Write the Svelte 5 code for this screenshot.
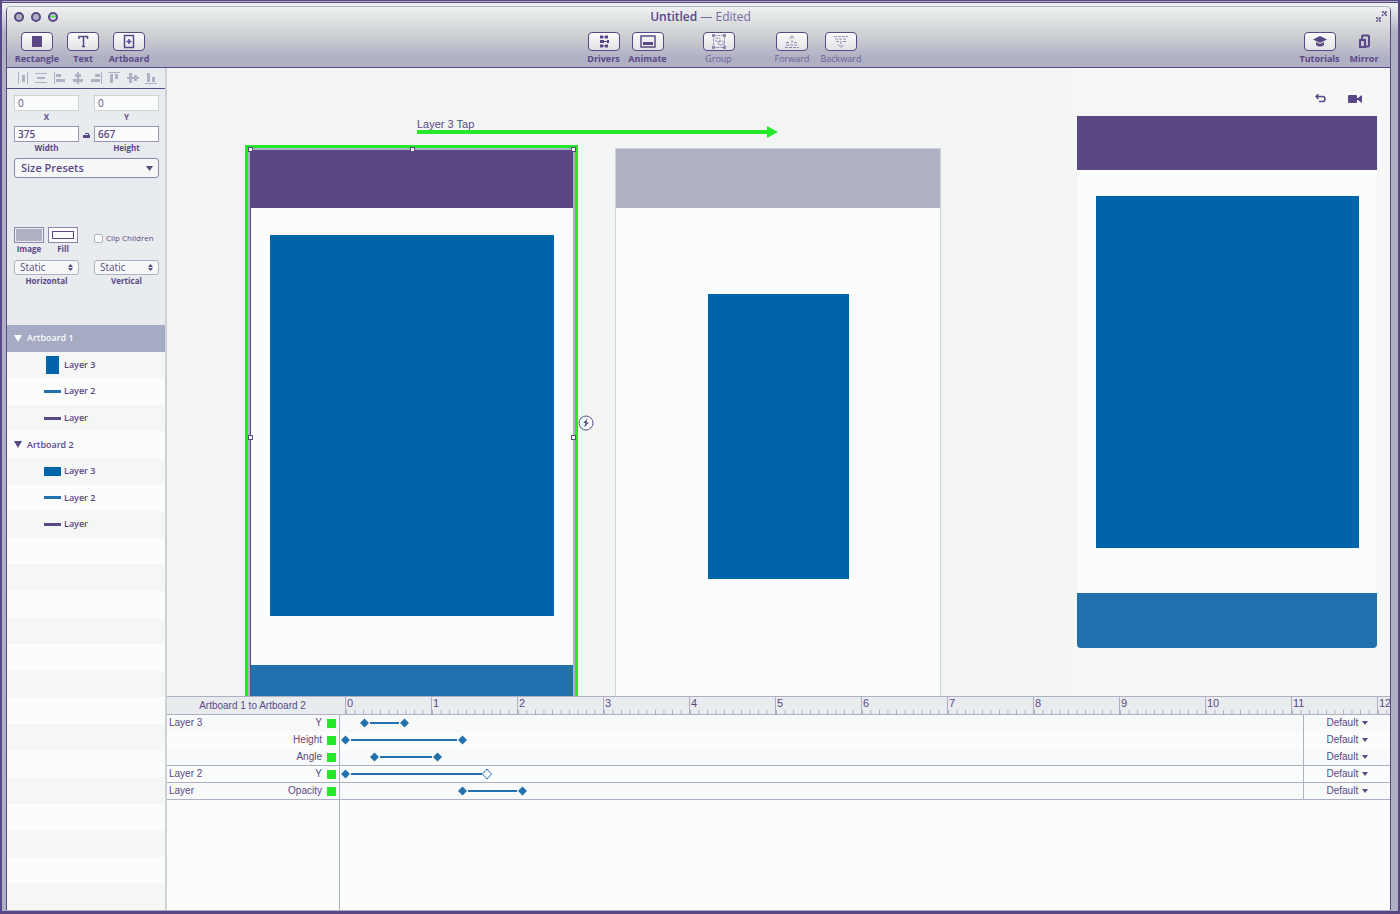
<script>
  const alignments = [
    { name: 'Distribute horizontally', d: 'M1 0h1v12h-1zM10 0h1v12h-1zM5 3h3v7h-3z' },
    { name: 'Distribute vertically', d: 'M0 1h12v1h-12zM0 10h12v1h-12zM2 5h8v2h-8z' },
    { name: 'Align left', d: 'M0 0h1v12h-1zM2 2h5v3h-5zM2 7h9v3h-9z' },
    { name: 'Align centre', d: 'M5 0h2v12h-2zM3 2h6v3h-6zM1 7h10v3h-10z' },
    { name: 'Align right', d: 'M11 0h1v12h-1zM5 2h5v3h-5zM1 7h9v3h-9z' },
    { name: 'Align top', d: 'M0 0h12v1h-12zM2 2h3v9h-3zM7 2h3v5h-3z' },
    { name: 'Align middle', d: 'M0 5h12v2h-12zM2 1h3v10h-3zM7 3h3v6h-3z' },
    { name: 'Align bottom', d: 'M0 11h12v1h-12zM2 1h3v9h-3zM7 5h3v5h-3z' }
  ];

  const layers = [
    { label: 'Artboard 1', group: true, selected: true },
    { label: 'Layer 3', thumb: 'tall' },
    { label: 'Layer 2', thumb: 'bar blue' },
    { label: 'Layer', thumb: 'bar' },
    { label: 'Artboard 2', group: true },
    { label: 'Layer 3', thumb: 'wide' },
    { label: 'Layer 2', thumb: 'bar blue' },
    { label: 'Layer', thumb: 'bar' }
  ];
  const rowCount = 22;
  const rows = Array.from({ length: rowCount }, (_, i) => layers[i] ?? null);

  const seconds = Array.from({ length: 13 }, (_, i) => i);
  // Keyframe offsets are measured from the left edge of the track.
  const tracks = [
    { layer: 'Layer 3', prop: 'Y', from: 24, to: 64, shade: true },
    { layer: '', prop: 'Height', from: 5, to: 122 },
    { layer: '', prop: 'Angle', from: 34, to: 97, shade: true, last: true },
    { layer: 'Layer 2', prop: 'Y', from: 5, to: 147, open: true, last: true },
    { layer: 'Layer', prop: 'Opacity', from: 122, to: 182, shade: true, last: true }
  ];
</script>

{#snippet tool(name, disabled, width)}
  <button class="tool {width}" class:disabled {disabled}>
    <span class="face" class:bare={name === 'Mirror'}>
      <svg width="18" height="15" viewBox="0 0 18 15" fill="none" stroke="currentColor" aria-hidden="true">
        {#if name === 'Rectangle'}
          <rect x="4" y="2" width="10" height="11" fill="currentColor" stroke="none" />
        {:else if name === 'Text'}
          <path d="M5 5V2.500h8.500V5M9.500 2.500v10M8 12.500h3" stroke-width="1.500" />
        {:else if name === 'Artboard'}
          <path d="M4.500 1.500h9v12h-9zM9 5v5M6.500 7.500h5" stroke-width="1.500" />
        {:else if name === 'Drivers'}
          <path d="M5 3h8M8 7.500h5M5 12h8" />
          <path d="M5 1.500h3v3H5zM10 1.500h3v3h-3zM5 6h4v3H5zM12 6h2v3h-2zM5 10.500h3v3H5zM10 10.500h3v3h-3z" fill="currentColor" stroke="none" />
        {:else if name === 'Animate'}
          <rect x="2" y="2" width="14" height="11" stroke-width="1.500" />
          <path d="M4 8h10v3H4z" fill="currentColor" stroke="none" />
        {:else if name === 'Group'}
          <rect x="3.500" y="1.500" width="11" height="12" stroke-dasharray="3 1" />
          <path d="M6 4h4v4H6zM9 7h4v4H9z" stroke-dasharray="2 1" />
          <path d="M2 0h3v3H2zM13 0h3v3h-3zM2 12h3v3H2zM13 12h3v3h-3z" fill="currentColor" stroke="none" />
        {:else if name === 'Forward'}
          <path d="M9 9V2M6 4.500L9 1.500l3 3M3 8.500h4M11 8.500h4M3 11h12M2 13.500h14" stroke-dasharray="3 1" />
        {:else if name === 'Backward'}
          <path d="M2 2.500h14M3 5h12M4 7.500h3M11 7.500h3M9 7v5M6 10.500l3 3 3-3" stroke-dasharray="3 1" />
        {:else if name === 'Tutorials'}
          <path d="M9 2L2 5.500 9 9l7-3.500zM5 8v3q4 3 8 0V8l-4 2z" fill="currentColor" stroke="none" />
        {:else}
          <path d="M7 5V2.500q0-1 1-1h5q1 0 1 1v9q0 1-1 1H11" stroke-width="2" />
          <rect x="5" y="6" width="5" height="7" stroke-width="2" />
        {/if}
      </svg>
    </span>
    <span>{name}</span>
  </button>
{/snippet}

<div class="desktop">
  <div class="window">
    <header>
      <div class="titlebar">
        <div class="lights">
          <button aria-label="Close"><i></i></button>
          <button aria-label="Minimise"><i></i></button>
          <button aria-label="Zoom"><i class="go"></i></button>
        </div>
        <h1>Untitled <span>— Edited</span></h1>
        <button class="expand" aria-label="Full screen">
          <svg width="12" height="12" viewBox="0 0 12 12" fill="none" stroke="#5a4886" stroke-width="1.500">
            <path d="M7 5l4-4M7 1h4v4M5 7l-4 4M1 7h4v4" stroke-dasharray="2 1" />
          </svg>
        </button>
      </div>
      <nav class="toolbar" aria-label="Tools">
        <div class="tools">
          {@render tool('Rectangle', false, 'mid')}
          {@render tool('Text', false, 'mid')}
          {@render tool('Artboard', false, 'mid')}
        </div>
        <div class="tools spaced">
          <div class="tools">
            {@render tool('Drivers', false, 'snug')}
            {@render tool('Animate', false, 'snug')}
          </div>
          {@render tool('Group', true, 'mid')}
          <div class="tools">
            {@render tool('Forward', true, 'large')}
            {@render tool('Backward', true, 'large')}
          </div>
        </div>
        <div class="tools">
          {@render tool('Tutorials', false, 'large')}
          {@render tool('Mirror', false, 'small')}
        </div>
      </nav>
    </header>

    <div class="body">
      <aside>
        <div class="aligns">
          {#each alignments as a}
            <button aria-label={a.name}>
              <svg width="12" height="12" viewBox="0 0 12 12" fill="#b0b0c4"><path d={a.d} /></svg>
            </button>
          {/each}
        </div>

        <div class="inspector">
          <div class="pair">
            <label class="field faint"><input value="0" /><span>X</span></label>
            <label class="field faint"><input value="0" /><span>Y</span></label>
          </div>
          <div class="pair sizes">
            <label class="field"><input value="375" /><span>Width</span></label>
            <svg class="lock" width="7" height="6" viewBox="0 0 7 6" aria-hidden="true">
              <path d="M0 3h7v3H0zM2 1h4v3H5V2H2z" fill="#5a4886" />
            </svg>
            <label class="field"><input value="667" /><span>Height</span></label>
          </div>
          <div class="presets">
            <select aria-label="Size presets"><option>Size Presets</option></select>
            <svg width="7" height="5" viewBox="0 0 7 5" aria-hidden="true"><path d="M0 0h7L3.500 5z" fill="#5a4886" /></svg>
          </div>
          <div class="pair paint">
            <div class="swatches">
              <button class="swatch"><span class="chip image"></span>Image</button>
              <button class="swatch"><span class="chip fill"><i></i></span>Fill</button>
            </div>
            <label class="clip"><input type="checkbox" />Clip Children</label>
          </div>
          <div class="pair">
            {#each ['Horizontal', 'Vertical'] as axis}
              <label class="field">
                <span class="static">
                  <select><option>Static</option></select>
                  <svg width="5" height="7" viewBox="0 0 5 7" aria-hidden="true"><path d="M0 3L2.500 0 5 3zM0 4h5L2.500 7z" fill="#5a4886" /></svg>
                </span>
                <span>{axis}</span>
              </label>
            {/each}
          </div>
        </div>

        <ul class="layers">
          {#each rows as row}
            <li class:selected={row?.selected}>
              {#if row?.group}
                <svg width="8" height="7" viewBox="0 0 8 7" aria-hidden="true"><path d="M0 0h8L4 7z" fill="currentColor" /></svg>
                <span>{row.label}</span>
              {:else if row}
                <span class="thumb"><i class={row.thumb}></i></span>
                <span>{row.label}</span>
              {/if}
            </li>
          {/each}
        </ul>
      </aside>

      <main>
        <section class="canvas" aria-label="Canvas">
          <div class="transition">
            <span>Layer 3 Tap</span>
            <svg width="361" height="12" viewBox="0 0 361 12" fill="#25e82b" aria-hidden="true">
              <path d="M0 4h350V0l11 6-11 6V8H0z" />
            </svg>
          </div>

          <div class="artboard first">
            <div class="head"></div>
            <div class="card"></div>
            <div class="foot"></div>
            <i class="handle tl"></i><i class="handle tc"></i><i class="handle tr"></i>
            <i class="handle ml"></i><i class="handle mr"></i>
          </div>
          <svg class="bolt" width="16" height="16" viewBox="0 0 16 16" aria-hidden="true">
            <circle cx="8" cy="8" r="7" fill="#fbfcfc" stroke="#5a4886" />
            <path d="M9.500 3.500L5 8h2.500L6 12.500 11 7.500H8.500z" fill="#5a4886" />
          </svg>

          <div class="artboard second">
            <div class="head"></div>
            <div class="card"></div>
          </div>

          <div class="preview">
            <div class="controls">
              <button aria-label="Restart">
                <svg width="11" height="9" viewBox="0 0 11 9" fill="none" stroke="#5a4886" stroke-width="1.500">
                  <path d="M3.500 0L1 2.500 3.500 5M1 2.500h6.500q2.500 0 2.500 2.500t-2.500 2.500H4" />
                </svg>
              </button>
              <button aria-label="Record">
                <svg width="14" height="8" viewBox="0 0 14 8" fill="#5a4886">
                  <path d="M1 0h7q1 0 1 1v6q0 1-1 1H1Q0 8 0 7V1Q0 0 1 0zM9 3h1l3-2.500h1v7h-1L10 5H9z" />
                </svg>
              </button>
            </div>
            <div class="device">
              <div class="head"></div>
              <div class="card"></div>
              <div class="foot"></div>
            </div>
          </div>
        </section>

        <section class="timeline" aria-label="Timeline">
          <div class="line ruler">
            <div class="names"><span class="heading">Artboard 1 to Artboard 2</span></div>
            <div class="scale">
              {#each seconds as s}<span>{s}</span>{/each}
            </div>
          </div>
          {#each tracks as t}
            <div class="line" class:shade={t.shade} class:last={t.last}>
              <div class="names"><span>{t.layer}</span><span>{t.prop}</span><i></i></div>
              <div class="track">
                <svg width="100%" height="16" aria-hidden="true">
                  <line x1={t.from + 6} x2={t.to - 5} y1="8" y2="8" stroke="#2271ae" stroke-width="2" />
                  <path d="M-4.500 0L0-4.500 4.500 0 0 4.500z" fill="#2271ae" transform="translate({t.from + 0.5} 8)" />
                  {#if t.open}
                    <path d="M-4.500 0L0-5 4.500 0 0 5z" fill="#fbfcfc" stroke="#2271ae" transform="translate({t.to} 8)" />
                  {:else}
                    <path d="M-4.500 0L0-4.500 4.500 0 0 4.500z" fill="#2271ae" transform="translate({t.to + 0.5} 8)" />
                  {/if}
                </svg>
              </div>
              <div class="easing">
                <select aria-label="Easing"><option>Default</option></select>
                <svg width="6" height="4" viewBox="0 0 6 4" aria-hidden="true"><path d="M0 0h6L3 4z" fill="#5a4886" /></svg>
              </div>
            </div>
          {/each}
          <div class="line rest"><div class="names"></div></div>
        </section>
      </main>
    </div>
  </div>
</div>

<style>
  :global(body) { margin: 0; background: #5a4886; }
  * { box-sizing: border-box; }
  button, input, select { font: inherit; color: inherit; margin: 0; padding: 0; border: 0; background: none; border-radius: 0; appearance: none; }
  svg { display: block; flex: none; }
  i { display: block; }

  .desktop {
    height: 100vh;
    min-height: 800px;
    display: flex;
    padding: 3px 7px 1px 4px;
    border: 2px solid #5a4886;
    border-top: 3px double #5a4886;
    border-bottom-width: 3px;
    background: linear-gradient(#eceeef 3px, #b0b0c4 30px);
    color: #5a4886;
    font-family: "Open Sans", "Noto Sans", sans-serif;
    font-size: 9px;
    line-height: 12px;
  }
  .window {
    flex: 1;
    min-width: 0;
    display: flex;
    flex-direction: column;
    border: 1px solid #5a4886;
    border-top-color: #b0b0c4;
    border-bottom: 0;
    border-radius: 5px 5px 0 0;
    overflow: hidden;
    background: #fbfcfc;
  }

  header {
    background: linear-gradient(#eef0f1, #cfd2d4 45%, #b0b0c4 85%);
    border-bottom: 1px solid #5a4886;
  }
  .titlebar { display: grid; grid-template-columns: 1fr auto 1fr; align-items: center; height: 19px; padding: 0 3px 0 7px; }
  .lights { display: flex; gap: 7px; }
  .lights i { width: 10px; height: 10px; border: 2px solid #5a4886; border-radius: 50%; background: #b0b0c4; }
  .lights i.go { background: linear-gradient(#cfd2d4 20%, #25e82b 40%, #cfd2d4 60%); }
  h1 { margin: 0; font-size: 12px; font-weight: 600; line-height: 16px; }
  h1 span { font-weight: 400; color: #776b9d; }
  .expand { justify-self: end; }
  .toolbar { display: flex; justify-content: space-between; padding: 6px 6px 2px 7px; }
  .tools { display: flex; }
  .spaced { gap: 26px; }
  .tool { display: flex; flex-direction: column; align-items: center; gap: 2px; font-weight: 700; }
  .tool.small { width: 40px; }
  .tool.snug { width: 44px; }
  .tool.mid { width: 46px; }
  .tool.large { width: 49px; }
  .face { width: 32px; height: 19px; display: grid; place-items: center; border: 1px solid #5a4886; border-radius: 4px; background: linear-gradient(#fbfcfc, #e0e2e5); }
  .face.bare { border-color: transparent; background: none; }
  .tool.disabled { font-weight: 400; color: #6f6298; }
  .disabled svg { opacity: 0.7; }

  .body { flex: 1; min-height: 0; display: flex; }
  aside { flex: none; width: 160px; display: flex; flex-direction: column; border-right: 2px solid #cfd2d4; background: #e9ecee; }
  .aligns { display: flex; justify-content: space-between; align-items: center; height: 21px; padding: 0 8px 0 10px; border-bottom: 1px solid #5a4886; }
  .inspector { height: 236px; padding: 6px 6px 0 7px; font-weight: 600; }
  .pair { display: flex; justify-content: space-between; }
  .field { width: 65px; display: flex; flex-direction: column; text-align: center; font-size: 8px; font-weight: 700; }
  .field > input { width: 100%; height: 16px; padding: 0 3px; border: 1px solid #9a93b5; background: #fbfcfc; font-size: 10px; font-weight: 600; }
  .faint > input { border-color: #cfd2d4; font-weight: 400; }
  .sizes { margin-top: 3px; }
  .lock { margin-top: 6px; }
  .presets { display: flex; align-items: center; height: 20px; margin-top: 4px; padding-right: 5px; border: 1px solid #8d85ab; border-radius: 3px; background: #f6f8f8; }
  .presets select { flex: 1; min-width: 0; padding-left: 6px; font-size: 11px; line-height: 18px; }
  .paint { margin-top: 49px; }
  .swatches { display: flex; gap: 4px; }
  .swatch { width: 30px; text-align: center; font-size: 8px; font-weight: 700; }
  .chip { display: block; height: 16px; border: 1px solid #8d85ab; }
  .image { background: #b0b0c4; box-shadow: inset 0 0 0 1px #e9ecee; }
  .fill { padding: 3px; background: #fbfcfc; }
  .fill i { height: 8px; border: 1px solid #5a4886; }
  .clip { display: flex; align-items: center; gap: 3px; width: 65px; height: 22px; font-size: 8px; font-weight: 400; white-space: nowrap; }
  .clip input { flex: none; width: 9px; height: 9px; border: 1px solid #b0b0c4; border-radius: 2px; background: #fbfcfc; }
  .paint + .pair { margin-top: 5px; }
  .static { display: flex; align-items: center; height: 15px; padding: 0 5px; border: 1px solid #b0b0c4; border-radius: 3px; background: #f6f8f8; }
  .static select { flex: 1; min-width: 0; font-size: 10px; font-weight: 400; line-height: 13px; }

  .layers { flex: 1; display: flex; flex-direction: column; margin: 0; padding: 0; list-style: none; background: #fbfcfc; font-weight: 600; }
  li { flex: 1; display: flex; align-items: center; gap: 5px; padding-left: 7px; }
  li:nth-child(even) { background: #f5f7f7; }
  li.selected { background: #a5abc2; color: #fbfcfc; }
  .thumb { width: 17px; margin-left: 30px; margin-right: -2px; display: grid; place-items: center; }
  .thumb .bar { width: 17px; height: 3px; background: #5a4886; }
  .thumb .blue { background: #2271ae; }
  .thumb .tall { width: 13px; height: 18px; background: #0064aa; }
  .thumb .wide { width: 17px; height: 9px; background: #0064aa; }

  main { flex: 1; min-width: 0; display: flex; flex-direction: column; }
  .canvas { flex: 1; position: relative; overflow: hidden; display: flex; justify-content: flex-end; background: #f3f5f5; }
  .transition { position: absolute; left: 250px; top: 50px; font: 11px/12px "Liberation Sans", Arial, sans-serif; }
  .transition svg { margin-top: -4px; }
  .artboard { position: absolute; display: flex; flex-direction: column; background: #fbfcfc; }
  .first { left: 83px; top: 82px; width: 323px; height: 574px; border-left: 1px solid #5a4886; box-shadow: 0 0 0 2px #b0b0c4, 0 0 0 5px #25e82b; }
  .second { left: 449px; top: 81px; width: 324px; height: 575px; box-shadow: 0 0 0 1px #cfd2d4; }
  .artboard .head { height: 58px; background: #5a4886; }
  .second .head { height: 59px; background: #b0b0c4; }
  .card { background: #0064aa; }
  .first .card { height: 381px; margin: 27px 19px 0; }
  .second .card { height: 285px; margin: 86px 91px 0 92px; }
  .first .foot { flex: 1; margin-top: 49px; background: #2271ae; }
  .handle { position: absolute; width: 5px; height: 5px; border: 1px solid #5a4886; background: #fbfcfc; }
  .tl, .ml { left: -3px; }
  .tc { left: 159px; }
  .tr, .mr { right: -3px; }
  .tl, .tc, .tr { top: -3px; }
  .ml, .mr { top: 285px; }
  .bolt { position: absolute; left: 411px; top: 347px; }
  .preview { flex: none; display: flex; flex-direction: column; width: 317px; padding: 0 13px 0 4px; background: #f6f8f8; }
  .controls { display: flex; justify-content: flex-end; align-items: center; gap: 22px; height: 48px; padding: 13px 15px 0 0; }
  .device { background: #fbfcfc; border-radius: 0 0 4px 4px; overflow: hidden; box-shadow: 0 0 1px #cfd2d4; }
  .device .head { height: 54px; background: #5a4886; }
  .device .card { height: 352px; margin: 26px 18px 45px 19px; }
  .device .foot { height: 55px; background: #2271ae; }

  .timeline { flex: none; height: 214px; display: flex; flex-direction: column; border-top: 1px solid #b0b0c4; font: 10px/12px "Liberation Sans", Arial, sans-serif; }
  .line { flex: none; display: flex; height: 17px; }
  .ruler { height: 18px; background: #e9ecee; border-bottom: 1px solid #b0b0c4; }
  .shade { background: #f8f9f9; }
  .last { border-bottom: 1px solid #b0b0c4; }
  .rest { flex: 1; }
  .names { flex: none; width: 173px; display: flex; align-items: center; padding: 0 3px 0 2px; border-right: 1px solid #b0b0c4; }
  .names span:nth-child(2) { margin-left: auto; }
  .names i { width: 9px; height: 9px; margin-left: 5px; background: #25e82b; }
  .ruler .names { border-right-color: transparent; }
  .heading { flex: 1; text-align: center; }
  .scale { flex: 1; min-width: 0; display: flex; overflow: hidden; padding-left: 5px; }
  .scale span { flex: none; width: 86px; padding-left: 1px; border-left: 1px solid #b0b0c4; font-size: 11px; line-height: 13px; background: linear-gradient(90deg, #b0b0c4 1px, transparent 1px) 0 100% / 10% 4px repeat-x; }
  .track { flex: 1; min-width: 0; overflow: hidden; }
  .easing { flex: none; width: 87px; display: flex; align-items: center; justify-content: center; gap: 3px; border-left: 1px solid #b0b0c4; }
  .line:not(.last):not(.ruler) > .names, .line:not(.last) > .easing { padding-bottom: 1px; }
</style>
